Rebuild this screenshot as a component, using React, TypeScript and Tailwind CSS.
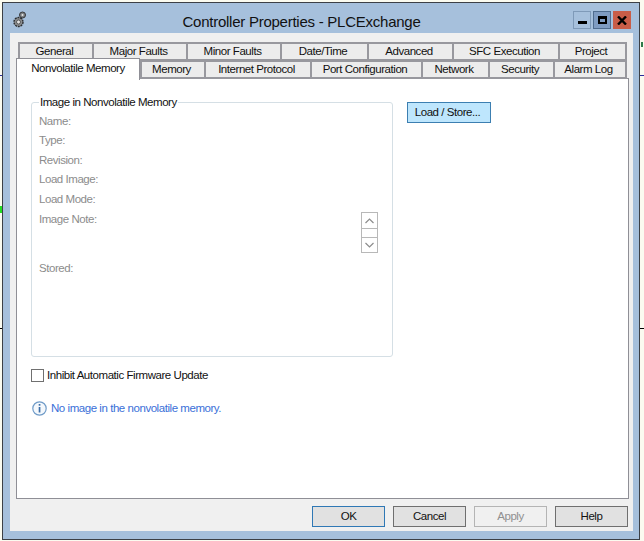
import React from "react";

const topTabs = [
  ["General", "w-[74px]"],
  ["Major Faults", "w-[94px]"],
  ["Minor Faults", "w-[94px]"],
  ["Date/Time", "w-[87px]"],
  ["Advanced", "w-[85px]"],
  ["SFC Execution", "w-[106px]"],
  ["Project", "w-[69px]"],
];

const bottomTabs = [
  ["Memory", "w-[64px]"],
  ["Internet Protocol", "w-[106px]"],
  ["Port Configuration", "w-[111px]"],
  ["Network", "w-[67px]"],
  ["Security", "w-[65px]"],
  ["Alarm Log", "w-[74px]"],
];

const fields = ["Name:", "Type:", "Revision:", "Load Image:", "Load Mode:", "Image Note:"];

function Tab({ label, width }: { label: string; width: string }) {
  return (
    <div
      className={`${width} h-[19px] shrink-0 flex items-center justify-center pt-[1px] pr-[3px] bg-[#ececec] border-2 border-r-0 last:border-r-2 border-[#98989e] text-[#111]`}
    >
      {label}
    </div>
  );
}

function DialogButton({ label, className }: { label: string; className: string }) {
  return (
    <div className={`w-[73px] h-[21px] flex items-center justify-center border ${className}`}>{label}</div>
  );
}

function GearIcon() {
  return (
    <svg width="14" height="17" viewBox="0 0 14 17">
      <circle cx="9.5" cy="4" r="3" fill="#7d8083" stroke="#35373a" strokeWidth="1" />
      <circle cx="9.5" cy="4" r="1" fill="#e8e8e8" />
      <circle cx="5.5" cy="11" r="4.5" fill="#8a8c8e" stroke="#2c2e31" strokeWidth="1.4" strokeDasharray="2 0.8" />
      <circle cx="5.5" cy="11" r="2" fill="#e4e4e4" stroke="#444" strokeWidth="0.8" />
    </svg>
  );
}

export default function App() {
  return (
    <div
      className="relative w-[644px] h-[541px] overflow-hidden bg-[#fbfbf0] pt-[2px] pl-[2px] text-[11.5px] tracking-[-0.45px] leading-none"
      style={{ fontFamily: '"Liberation Sans", Arial, sans-serif' }}
    >
      {/* bits of the desktop showing round the window */}
      <div className="absolute left-0 top-[75px] w-[2px] h-[1px] bg-[#2a2a9a]" />
      <div className="absolute left-0 top-[206px] w-[2px] h-[7px] bg-[#22dd22]" />
      <div className="absolute left-0 top-[328px] w-[2px] h-[1px] bg-black" />
      <div className="absolute right-0 top-[75px] w-[4px] h-[1px] bg-[#2a2a9a]" />
      <div className="absolute right-0 top-[328px] w-[4px] h-[1px] bg-black" />
      <div className="absolute right-[1px] top-[42px] w-[2px] h-[5px] bg-[#2f7a4a]" />

      <div className="w-[638px] h-[538px] border border-[#3c4046] bg-[#a6c0dc] flex flex-col pl-[7px] pr-[6px] pb-[8px]">
        {/* title bar */}
        <div className="h-[30px] shrink-0 flex items-center relative">
          <div className="ml-[3px] mt-[3px]">
            <GearIcon />
          </div>
          <div className="w-[553px] pl-[10px] text-center text-[15px] tracking-[-0.25px] text-[#111] mt-[7px] -ml-[7px]">
            Controller Properties - PLCExchange
          </div>
          <div className="ml-auto flex gap-[2px] mr-[2px] mt-[4px]">
            <div className="w-[18px] h-[18px] border border-[#7f9ab8] bg-[#a6c0dc] flex items-end justify-center pb-[4px]">
              <div className="w-[9px] h-[3px] bg-black" />
            </div>
            <div className="w-[18px] h-[18px] border border-[#4f6c8e] bg-[#7f9cc2] flex items-center justify-center">
              <div className="w-[9px] h-[8px] border-2 border-t-[3px] border-black" />
            </div>
            <div className="w-[18px] h-[18px] bg-[#c85d48] flex items-center justify-center">
              <svg width="10" height="9" viewBox="0 0 10 9">
                <path d="M1 0.5 L9 8.5 M9 0.5 L1 8.5" stroke="#000" strokeWidth="2.4" />
              </svg>
            </div>
          </div>
        </div>

        {/* dialog */}
        <div className="flex-1 bg-[#f0f0f0] pt-[9px] pl-[6px] flex flex-col">
          <div className="flex ml-[2px]">
            {topTabs.map(([label, width]) => (
              <Tab key={label} label={label} width={width} />
            ))}
          </div>
          <div className="flex h-[18px] relative z-10 -mt-[1px]">
            <div className="w-[124px] h-[22px] -mt-[2px] shrink-0 flex items-center justify-center bg-white border border-b-0 border-[#8f8f96] pb-[2px] text-[#111]">
              Nonvolatile Memory
            </div>
            {bottomTabs.map(([label, width]) => (
              <Tab key={label} label={label} width={width} />
            ))}
          </div>

          <div className="w-[613px] h-[421px] bg-white border border-[#8f8f96] pt-[19px] pl-[14px] flex items-start">
            <fieldset className="w-[362px] h-[260px] border border-[#d5dfe5] rounded-[3px] -mt-[1px] pl-[7px]">
              <legend className="px-[1px] text-[#111]">Image in Nonvolatile Memory</legend>
              <div className="flex flex-col text-[#8c8c8c] mt-[3px]">
                {fields.map((f) => (
                  <div key={f} className="h-[19.6px] flex items-center">
                    {f}
                  </div>
                ))}
                <div className="relative h-[30px]">
                  <div className="absolute left-[322px] -top-[17px] w-[17px] h-[41px] border border-[#b8b8b8] bg-white flex flex-col">
                    <div className="h-[16px] flex items-center justify-center border-b border-[#b8b8b8]">
                      <svg width="9" height="6" viewBox="0 0 9 6">
                        <path d="M0.5 5 L4.5 1 L8.5 5" fill="none" stroke="#8c8c8c" strokeWidth="1.2" />
                      </svg>
                    </div>
                    <div className="h-[8px]" />
                    <div className="flex-1 flex items-center justify-center border-t border-[#b8b8b8]">
                      <svg width="9" height="6" viewBox="0 0 9 6">
                        <path d="M0.5 1 L4.5 5 L8.5 1" fill="none" stroke="#8c8c8c" strokeWidth="1.2" />
                      </svg>
                    </div>
                  </div>
                </div>
                <div className="h-[19.6px] flex items-center">Stored:</div>
              </div>
            </fieldset>
            <div className="ml-[14px] mt-[4px] w-[84px] h-[21px] flex items-center justify-center pr-[3px] bg-[#bee6fd] border border-[#3c7fb1] text-[#111]">
              Load / Store...
            </div>
          </div>

          <div className="h-0 relative z-20">
            <div className="absolute left-[15px] -top-[130px] flex items-center text-[#111]">
              <div className="w-[13px] h-[13px] border border-[#707070] bg-white mr-[3px]" />
              Inhibit Automatic Firmware Update
            </div>
            <div className="absolute left-[16px] -top-[98px] flex items-center text-[#3a6fd8]">
              <svg width="15" height="15" viewBox="0 0 15 15" className="mr-[4px]">
                <circle cx="7.5" cy="7.5" r="6.7" fill="#f4f8fc" stroke="#6f9bc8" strokeWidth="1.2" />
                <rect x="6.7" y="3" width="1.7" height="1.7" fill="#3c6ea8" />
                <rect x="6.7" y="6" width="1.7" height="5.5" fill="#3c6ea8" />
              </svg>
              No image in the nonvolatile memory.
            </div>
          </div>

          <div className="flex gap-[8px] pl-[296px] mt-[7px] text-[#111]">
            <DialogButton label="OK" className="bg-[#e1e1e1] border-[#2f78b5]" />
            <DialogButton label="Cancel" className="bg-[#e1e1e1] border-[#6f6f6f]" />
            <DialogButton label="Apply" className="bg-[#f0f0f0] border-[#b4b4b4] text-[#8f8f8f]" />
            <DialogButton label="Help" className="bg-[#e1e1e1] border-[#6f6f6f]" />
          </div>
        </div>
      </div>
    </div>
  );
}
